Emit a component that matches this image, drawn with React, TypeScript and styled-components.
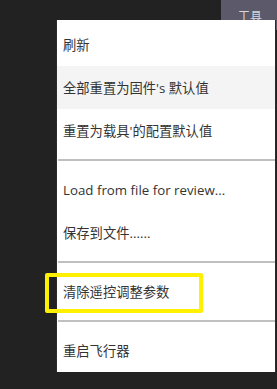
import React, { FC } from "react";
import styled, { createGlobalStyle } from "styled-components";

interface MenuEntry {
  label?: string;
  divider?: boolean;
  active?: boolean;
  marked?: boolean;
}

const entries: MenuEntry[] = [
  { label: "刷新" },
  { label: "全部重置为固件's 默认值", active: true },
  { label: "重置为载具'的配置默认值" },
  { divider: true },
  { label: "Load from file for review..." },
  { label: "保存到文件......" },
  { divider: true },
  { label: "清除遥控调整参数", marked: true },
  { divider: true },
  { label: "重启飞行器" },
];

const App: FC = () => {
  return (
    <Page>
      <GlobalStyle />
      <TopBar>
        <Tab>工具</Tab>
      </TopBar>
      <Menu>
        {entries.map((entry, index) =>
          entry.divider ? (
            <Divider key={index} />
          ) : (
            <Item key={index} $active={entry.active}>
              {entry.label}
              {entry.marked && <Marker />}
            </Item>
          )
        )}
      </Menu>
    </Page>
  );
};

export default App;

const GlobalStyle = createGlobalStyle`
  html, body {
    margin: 0;
    padding: 0;
    background: #222222;
  }
  body {
    font-family: "Open Sans", "Noto Sans CJK SC", sans-serif;
  }
`;

const Page = styled.div`
  position: relative;
  width: 277px;
  height: 389px;
  background: #222222;
  overflow: hidden;
`;

const TopBar = styled.div`
  display: flex;
  justify-content: flex-end;
`;

const Tab = styled.div`
  width: 56px;
  height: 30px;
  background: #5c5a6a;
  color: #d8d8dc;
  font-family: "Noto Sans CJK SC", sans-serif;
  font-size: 12px;
  line-height: 12px;
  padding-top: 10px;
  box-sizing: border-box;
  text-align: center;
  text-indent: 2px;
`;

const Menu = styled.div`
  position: absolute;
  top: 20px;
  left: 56px;
  width: 220px;
  padding-top: 3px;
  box-sizing: border-box;
  background: #ffffff;
  border-left: 1px solid #2b2b2b;
  border-right: 1px solid #2b2b2b;
`;

const Item = styled.div<{ $active?: boolean }>`
  position: relative;
  height: 43px;
  display: flex;
  align-items: center;
  padding-left: 6px;
  color: #333333;
  font-size: 13.3px;
  white-space: nowrap;
  background: ${(p) => (p.$active ? "#f4f4f4" : "transparent")};
`;

const Divider = styled.div`
  height: 2px;
  margin: 7px 0 7px 1px;
  background: #c0c0c0;
`;

const Marker = styled.div`
  position: absolute;
  left: -12px;
  top: 3px;
  width: 158px;
  height: 40px;
  box-sizing: border-box;
  border: 4px solid #fff000;
  border-radius: 2px;
`;
